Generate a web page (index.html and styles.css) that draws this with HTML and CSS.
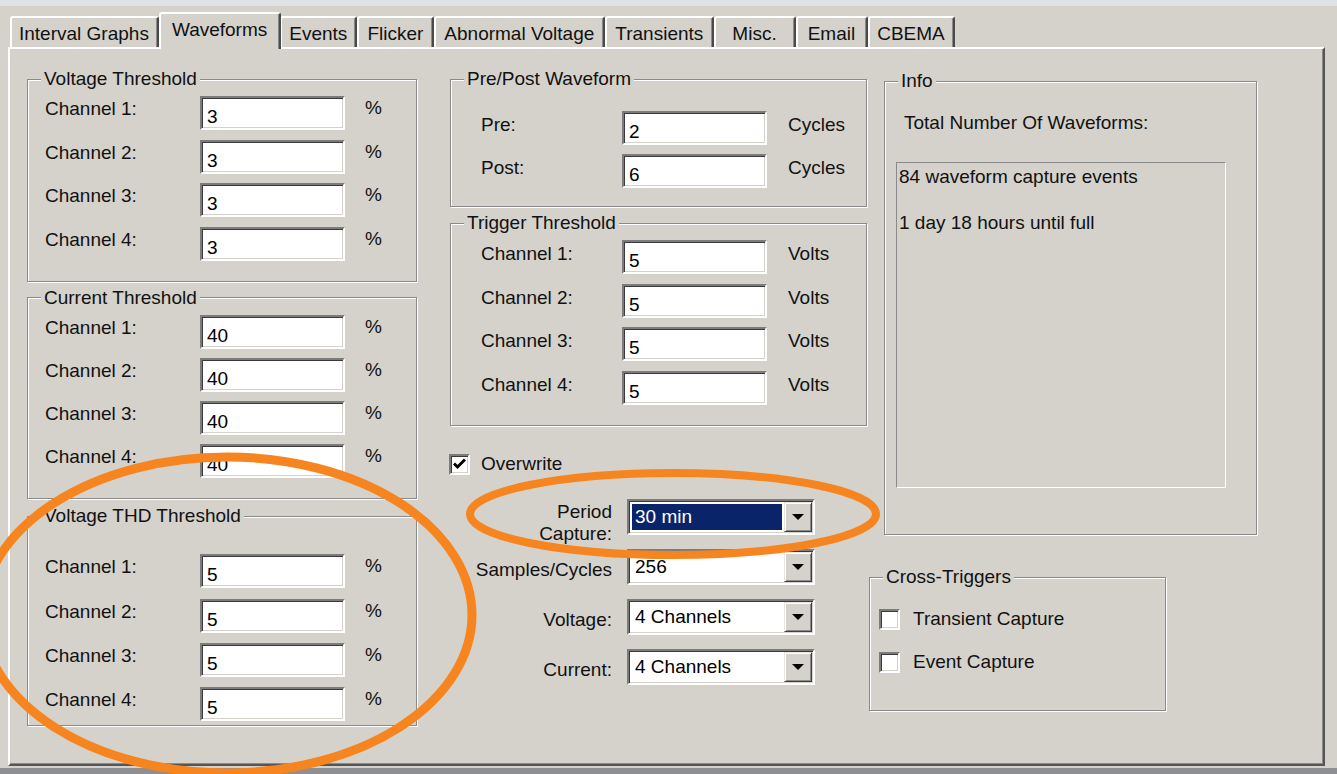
FILE: index.html
```html
<!DOCTYPE html>
<html>
<head>
  <title>Waveforms</title>
  <link rel="stylesheet" href="styles.css">
</head>
<body>
  <div class="topbar"></div>
  <div class="window">
    <div class="tabs">
      <div class="tab narrow">Interval Graphs</div>
      <div class="tab active">Waveforms</div>
      <div class="tab narrow">Events</div>
      <div class="tab">Flicker</div>
      <div class="tab">Abnormal Voltage</div>
      <div class="tab">Transients</div>
      <div class="tab misc">Misc.</div>
      <div class="tab wide">Email</div>
      <div class="tab narrow">CBEMA</div>
    </div>

    <div class="panel">
      <!-- left column: thresholds -->
      <div class="col col-left">
        <fieldset class="group">
          <legend>Voltage Threshold</legend>
          <div class="rows rows-volt">
            <div class="field"><span class="lbl">Channel 1:</span><span class="edit">3</span><span class="unit">%</span></div>
            <div class="field"><span class="lbl">Channel 2:</span><span class="edit">3</span><span class="unit">%</span></div>
            <div class="field"><span class="lbl">Channel 3:</span><span class="edit">3</span><span class="unit">%</span></div>
            <div class="field"><span class="lbl">Channel 4:</span><span class="edit">3</span><span class="unit">%</span></div>
          </div>
        </fieldset>

        <fieldset class="group next">
          <legend>Current Threshold</legend>
          <div class="rows rows-curr">
            <div class="field"><span class="lbl">Channel 1:</span><span class="edit">40</span><span class="unit">%</span></div>
            <div class="field"><span class="lbl">Channel 2:</span><span class="edit">40</span><span class="unit">%</span></div>
            <div class="field"><span class="lbl">Channel 3:</span><span class="edit">40</span><span class="unit">%</span></div>
            <div class="field"><span class="lbl">Channel 4:</span><span class="edit">40</span><span class="unit">%</span></div>
          </div>
        </fieldset>

        <fieldset class="group next thd">
          <legend>Voltage THD Threshold</legend>
          <div class="rows rows-thd">
            <div class="field"><span class="lbl">Channel 1:</span><span class="edit">5</span><span class="unit">%</span></div>
            <div class="field"><span class="lbl">Channel 2:</span><span class="edit">5</span><span class="unit">%</span></div>
            <div class="field"><span class="lbl">Channel 3:</span><span class="edit">5</span><span class="unit">%</span></div>
            <div class="field"><span class="lbl">Channel 4:</span><span class="edit">5</span><span class="unit">%</span></div>
          </div>
        </fieldset>
      </div>

      <!-- middle column: waveform capture -->
      <div class="col col-mid">
        <fieldset class="group">
          <legend>Pre/Post Waveform</legend>
          <div class="rows rows-pre">
            <div class="field"><span class="lbl">Pre:</span><span class="edit">2</span><span class="unit">Cycles</span></div>
            <div class="field"><span class="lbl">Post:</span><span class="edit">6</span><span class="unit">Cycles</span></div>
          </div>
        </fieldset>

        <fieldset class="group next">
          <legend>Trigger Threshold</legend>
          <div class="rows rows-trig">
            <div class="field"><span class="lbl">Channel 1:</span><span class="edit">5</span><span class="unit">Volts</span></div>
            <div class="field"><span class="lbl">Channel 2:</span><span class="edit">5</span><span class="unit">Volts</span></div>
            <div class="field"><span class="lbl">Channel 3:</span><span class="edit">5</span><span class="unit">Volts</span></div>
            <div class="field"><span class="lbl">Channel 4:</span><span class="edit">5</span><span class="unit">Volts</span></div>
          </div>
        </fieldset>

        <div class="check-row overwrite">
          <span class="checkbox">
            <svg width="13" height="12" viewBox="0 0 13 12"><path d="M1 5.5 L4.5 9 L12 1.5" fill="none" stroke="#000" stroke-width="3"/></svg>
          </span>
          <span class="check-lbl">Overwrite</span>
        </div>

        <div class="combos">
          <span class="clbl two">Period<br>Capture:</span>
          <div class="combo"><span class="combo-text sel">30 min</span><span class="drop"><i></i></span></div>
          <span class="clbl">Samples/Cycles</span>
          <div class="combo"><span class="combo-text">256</span><span class="drop"><i></i></span></div>
          <span class="clbl">Voltage:</span>
          <div class="combo"><span class="combo-text">4 Channels</span><span class="drop"><i></i></span></div>
          <span class="clbl">Current:</span>
          <div class="combo"><span class="combo-text">4 Channels</span><span class="drop"><i></i></span></div>
        </div>
      </div>

      <!-- right column: info -->
      <div class="col col-right">
        <fieldset class="group info">
          <legend>Info</legend>
          <div class="info-body">
            <div class="info-title">Total Number Of Waveforms:</div>
            <div class="info-box">
              <div class="info-line">84 waveform capture events</div>
              <div class="info-line">1 day 18 hours until full</div>
            </div>
          </div>
        </fieldset>

        <fieldset class="group cross">
          <legend>Cross-Triggers</legend>
          <div class="cross-body">
            <div class="check-row"><span class="checkbox"></span><span class="check-lbl">Transient Capture</span></div>
            <div class="check-row"><span class="checkbox"></span><span class="check-lbl">Event Capture</span></div>
          </div>
        </fieldset>
      </div>
    </div>
  </div>
  <div class="bottombar"></div>

  <!-- hand-drawn highlight marks -->
  <svg class="marks" width="1337" height="774" viewBox="0 0 1337 774">
    <ellipse cx="227" cy="615" rx="245" ry="158" fill="none" stroke="#f7851f" stroke-width="9"/>
    <ellipse cx="673" cy="514" rx="203" ry="41" fill="none" stroke="#f7851f" stroke-width="8"/>
  </svg>
</body>
</html>
```

FILE: styles.css
```css
* {
  box-sizing: border-box;
}
html, body {
  margin: 0;
  height: 100%;
  overflow: hidden;
}
body {
  position: relative;
  background-color: #d5d2cc;
  font-family: "Liberation Sans", Arial, sans-serif;
  font-size: 19px;
  color: #111;
}
.topbar {
  height: 6px;
  background-color: #e0e3e5;
}
.window {
  margin-left: 8px;
  width: 1317px;
}

/* tabs */
.tabs {
  display: flex;
  align-items: flex-end;
  height: 41px;
  padding-left: 2px;
}
.tab {
  height: 31px;
  line-height: 26px;
  padding: 3px 9px 0 8px;
  border-top: 2px solid #fff;
  border-left: 2px solid #fff;
  border-right: 2px solid #4a4a4a;
  border-radius: 3px 3px 0 0;
  box-shadow: inset -1px 0 #8a8a8a;
  white-space: nowrap;
}
.tab.narrow {
  padding: 3px 8px 0 7px;
}
.tab.wide {
  padding: 3px 11px 0 10px;
}
.tab.misc {
  padding: 3px 17px 0 16px;
}
.tab.active {
  position: relative;
  z-index: 1;
  height: 37px;
  margin: 0 -1px -2px 0;
  padding: 3px 12px 0 11px;
  background-color: #d5d2cc;
}

/* panel */
.panel {
  display: flex;
  align-items: flex-start;
  height: 719px;
  padding: 19px 0 0 17px;
  border: 2px solid #fff;
  border-right-color: #555;
  border-bottom-color: #555;
  box-shadow: inset -1px -1px #8a8a8a;
}
.bottombar {
  height: 6px;
  margin-top: 2px;
  background-color: #8d8f92;
}
.col-left {
  width: 390px;
}
.col-mid {
  width: 417px;
  margin-left: 33px;
}
.col-right {
  margin-left: 2px;
}

/* group boxes */
.group {
  margin: 0;
  padding: 0;
  min-width: 0;
  border: 1px solid #8a8a8a;
  box-shadow: 1px 1px 0 #fff, inset 1px 1px 0 #fff;
}
.group legend {
  margin-left: 13px;
  padding: 0 3px;
  line-height: 22px;
  background-color: #d5d2cc;
}
.group.next {
  margin-top: 5px;
}
.group.thd {
  margin-top: 6px;
}

.rows {
  display: grid;
}
.rows-volt {
  padding: 6px 0 20px 17px;
  row-gap: 9.5px;
}
.rows-curr {
  padding: 6px 0 20px 17px;
  row-gap: 9.3px;
}
.rows-thd {
  padding: 27px 0 4px 17px;
  row-gap: 10.3px;
}
.rows-pre {
  padding: 21px 0 18px 30px;
  row-gap: 9px;
}
.rows-trig {
  padding: 6px 0 20px 30px;
  row-gap: 9.7px;
}
.field {
  display: flex;
  height: 34px;
}
.lbl {
  width: 155px;
  padding-top: 2px;
  line-height: 22px;
}
.col-mid .lbl {
  width: 141px;
  padding-top: 3px;
}
.edit {
  width: 145px;
  height: 34px;
  padding: 6px 0 0 5px;
  line-height: 26px;
  background-color: #fff;
  color: #000;
  border: 2px solid;
  border-color: #7c7c7c #fff #fff #7c7c7c;
  box-shadow: inset 1px 1px 0 #3a3a3a, inset -1px -1px 0 #d5d2cc;
}
.unit {
  margin-left: 20px;
  padding-top: 1px;
  line-height: 22px;
}
.col-mid .unit {
  margin-left: 21px;
  padding-top: 3px;
}

/* checkboxes */
.check-row {
  display: flex;
  align-items: center;
  height: 22px;
}
.checkbox {
  display: flex;
  align-items: center;
  justify-content: center;
  width: 21px;
  height: 21px;
  background-color: #fff;
  border: 2px solid;
  border-color: #7c7c7c #fff #fff #7c7c7c;
  box-shadow: inset 1px 1px 0 #3a3a3a, inset -1px -1px 0 #d5d2cc;
}
.check-lbl {
  margin-left: 11px;
  line-height: 22px;
}
.overwrite {
  margin: 27px 0 0 -1px;
}

/* combo boxes */
.combos {
  display: grid;
  grid-template-columns: 162px 188px;
  column-gap: 15px;
  row-gap: 14px;
  margin-top: 24px;
}
.clbl {
  align-self: center;
  padding-top: 6px;
  text-align: right;
  line-height: 22px;
  white-space: nowrap;
}
.clbl.two {
  align-self: start;
  height: 36px;
  padding-top: 2px;
}
.combo {
  display: flex;
  height: 36px;
  background-color: #fff;
  border: 2px solid;
  border-color: #7c7c7c #fff #fff #7c7c7c;
  box-shadow: inset 1px 1px 0 #3a3a3a, inset -1px -1px 0 #d5d2cc;
}
.combo-text {
  flex: 1;
  margin: 3px 2px 3px 3px;
  padding-left: 3px;
  line-height: 26px;
  color: #000;
}
.combo-text.sel {
  background-color: #0a246a;
  color: #fff;
}
.drop {
  display: flex;
  align-items: center;
  justify-content: center;
  width: 28px;
  margin: 1px 1px 1px 0;
  background-color: #d5d2cc;
  border: 1px solid;
  border-color: #e8e6e2 #404040 #404040 #e8e6e2;
  box-shadow: inset 1px 1px 0 #fff, inset -1px -1px 0 #8a8a8a;
}
.drop i {
  width: 0;
  height: 0;
  border-left: 6px solid transparent;
  border-right: 6px solid transparent;
  border-top: 6px solid #000;
}

/* info box */
.group.info {
  width: 373px;
  margin: 2px 0 0 15px;
}
.info-body {
  padding: 20px 0 46px 11px;
}
.info-title {
  margin-left: 8px;
  line-height: 22px;
}
.info-box {
  width: 330px;
  height: 326px;
  margin-top: 28px;
  padding: 3px 0 0 2px;
  border: 1px solid;
  border-color: #8a8a8a #fff #fff #8a8a8a;
}
.info-line {
  line-height: 22px;
}
.info-line + .info-line {
  margin-top: 24px;
}

/* cross triggers */
.group.cross {
  width: 297px;
  margin-top: 31px;
}
.cross-body {
  display: grid;
  row-gap: 21px;
  padding: 20px 0 37px 9px;
}
.cross-body .check-lbl {
  margin-left: 13px;
}

.marks {
  position: absolute;
  top: 0;
  left: 0;
  pointer-events: none;
}
```
